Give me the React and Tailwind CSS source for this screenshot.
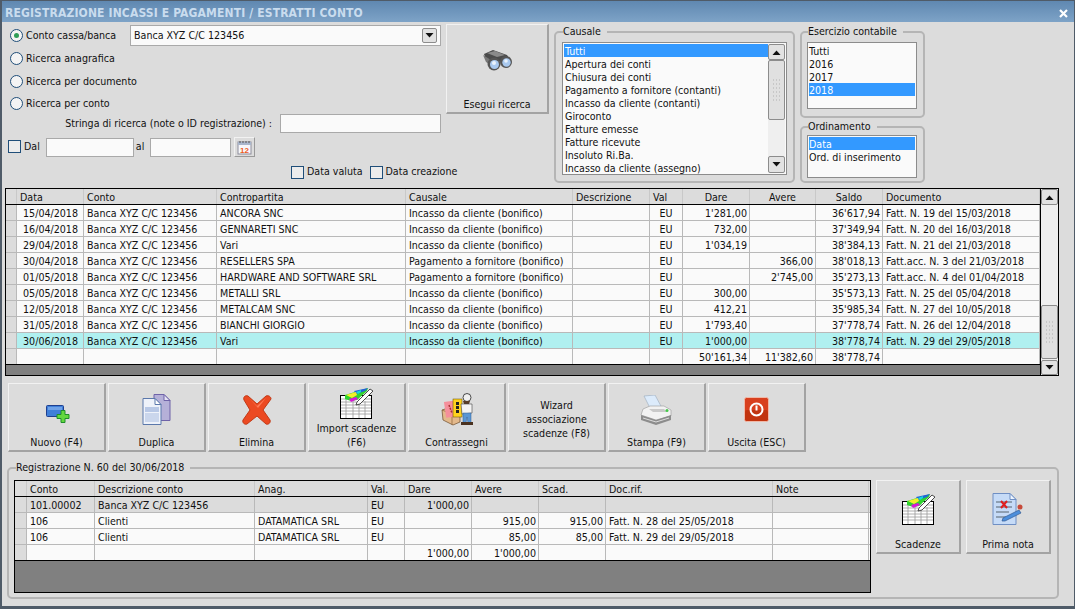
const mainCols = "grid grid-cols-[11px_67px_133px_189px_167px_77px_33px_67px_66px_67px_157px]";
const subCols = "grid grid-cols-[12px_68px_160px_113px_37px_67px_67px_67px_167px_96px]";

const movimenti = [
  ["15/04/2018", "ANCORA SNC", "Incasso da cliente (bonifico)", "1'281,00", "", "36'617,94", "Fatt. N. 19 del 15/03/2018"],
  ["16/04/2018", "GENNARETI SNC", "Incasso da cliente (bonifico)", "732,00", "", "37'349,94", "Fatt. N. 20 del 16/03/2018"],
  ["29/04/2018", "Vari", "Incasso da cliente (bonifico)", "1'034,19", "", "38'384,13", "Fatt. N. 21 del 21/03/2018"],
  ["30/04/2018", "RESELLERS SPA", "Pagamento a fornitore (bonifico)", "", "366,00", "38'018,13", "Fatt.acc. N. 3 del 21/03/2018"],
  ["01/05/2018", "HARDWARE AND SOFTWARE SRL", "Pagamento a fornitore (bonifico)", "", "2'745,00", "35'273,13", "Fatt.acc. N. 4 del 01/04/2018"],
  ["05/05/2018", "METALLI SRL", "Incasso da cliente (bonifico)", "300,00", "", "35'573,13", "Fatt. N. 25 del 05/04/2018"],
  ["12/05/2018", "METALCAM SNC", "Incasso da cliente (bonifico)", "412,21", "", "35'985,34", "Fatt. N. 27 del 10/05/2018"],
  ["31/05/2018", "BIANCHI GIORGIO", "Incasso da cliente (bonifico)", "1'793,40", "", "37'778,74", "Fatt. N. 26 del 12/04/2018"],
  ["30/06/2018", "Vari", "Incasso da cliente (bonifico)", "1'000,00", "", "38'778,74", "Fatt. N. 29 del 29/05/2018"],
];

const righe = [
  ["101.00002", "Banca XYZ C/C 123456", "", "EU", "1'000,00", "", "", ""],
  ["106", "Clienti", "DATAMATICA SRL", "EU", "", "915,00", "915,00", "Fatt. N. 28 del 25/05/2018"],
  ["106", "Clienti", "DATAMATICA SRL", "EU", "", "85,00", "85,00", "Fatt. N. 29 del 29/05/2018"],
  ["", "", "", "", "1'000,00", "1'000,00", "", ""],
];

const causali = ["Tutti", "Apertura dei conti", "Chiusura dei conti", "Pagamento a fornitore (contanti)", "Incasso da cliente (contanti)", "Giroconto", "Fatture emesse", "Fatture ricevute", "Insoluto Ri.Ba.", "Incasso da cliente (assegno)"];

function Cell({ children, right, center, head }) {
  return (
    <div className={`h-full px-[3px] pt-px border-r border-[#b9b9b9] overflow-hidden whitespace-nowrap leading-[14px] ${right ? "text-right pr-[2px]" : ""} ${center ? "text-center" : ""} ${head ? "border-[#c9c9c9]" : ""}`}>
      {children}
    </div>
  );
}

function Radio({ checked, label }) {
  return (
    <label className="flex items-center gap-[3px] ml-[2px] whitespace-nowrap">
      <span className="w-[13px] h-[13px] rounded-full border border-[#1f4e79] bg-[#f4f4f4] flex items-center justify-center">
        {checked && <span className="w-[5px] h-[5px] rounded-full bg-[#2f9e57]" />}
      </span>
      {label}
    </label>
  );
}

function Check({ label }) {
  return (
    <label className="flex items-center gap-[3px] whitespace-nowrap">
      <span className="w-[13px] h-[13px] border border-[#1f4e79] bg-[#ececec]" />
      {label}
    </label>
  );
}

function Arrow({ down }) {
  return (
    <svg width="9" height="5" viewBox="0 0 9 5">
      <path d={down ? "M0.5 0h8L4.5 4.5z" : "M0.5 5h8L4.5 0.5z"} fill="#111" />
    </svg>
  );
}

function ScrollBtn({ down, className }) {
  return (
    <div className={`flex items-center justify-center rounded-[2px] bg-[#e2e2e2] border border-[#8c8c8c] ${className}`}>
      <Arrow down={down} />
    </div>
  );
}

function Grip() {
  return (
    <svg width="7" height="23" viewBox="0 0 7 23">
      <path d="M0 1h7M0 5h7M0 9h7M0 13h7M0 17h7M0 21h7" stroke="#b0b0b0" strokeWidth="1" strokeDasharray="1 2" fill="none" />
    </svg>
  );
}

function ToolButton({ label, icon, className = "w-[98px] h-[69px]" }) {
  return (
    <button className={`${className} flex flex-col items-center bg-[#dcdcdc] border-t border-l border-t-[#f2f2f2] border-l-[#f2f2f2] border-b-2 border-r-2 border-b-[#a3a3a3] border-r-[#a3a3a3] text-center leading-[14px] pb-[1px]`}>
      {icon ? <span className="flex-1 flex items-center justify-center">{icon}</span> : null}
      <span className={icon ? "" : "pt-[14px]"}>{label}</span>
    </button>
  );
}

function Binoculars() {
  return (
    <svg width="32" height="24" viewBox="0 0 32 24">
      <path d="M3 5l9-4 14 5 4 6-5 3-7-3-4 2-9-3z" fill="#4b4b4b" />
      <path d="M6 4l8-2 10 4-8 2z" fill="#8a8a8a" />
      <path d="M2 6l8 5 0 5-5-3z" fill="#777" />
      <circle cx="13" cy="15" r="6.5" fill="#555" />
      <circle cx="13.5" cy="15.5" r="4.5" fill="#a9c9ef" />
      <circle cx="13" cy="14" r="2" fill="#eaf3fc" />
      <circle cx="25" cy="13" r="6" fill="#555" />
      <circle cx="25.5" cy="13.5" r="4.2" fill="#a9c9ef" />
      <circle cx="25" cy="12" r="1.8" fill="#eaf3fc" />
    </svg>
  );
}

function NewIcon() {
  return (
    <svg width="25" height="18" viewBox="0 0 25 18" className="mt-[8px] ml-[4px]">
      <rect x="0.5" y="0.5" width="17" height="11" rx="1" fill="#3f7fd9" stroke="#1f3f8f" />
      <rect x="2" y="2" width="14" height="3" fill="#6fa2e8" />
      <path d="M11 9.500h4v-4h4v4h4v4h-4v4h-4v-4h-4z" fill="#63d83f" stroke="#1f8f2a" />
    </svg>
  );
}

function DuplicateIcon() {
  return (
    <svg width="29" height="31" viewBox="0 0 29 31">
      <path d="M12 0.500h10l6 6v20H12z" fill="#b5b0d8" stroke="#6f63a8" />
      <path d="M22 0.500v6h6z" fill="#e6e4f4" stroke="#6f63a8" />
      <path d="M1 4.500h12l6 6v20H1z" fill="#eef2fa" stroke="#5b78ab" />
      <path d="M13 4.500v6h6z" fill="#fff" stroke="#5b78ab" />
      <rect x="3" y="13" width="14" height="5" fill="#b8c8e6" />
      <rect x="3" y="19" width="14" height="9" fill="#cad6ec" />
    </svg>
  );
}

function DeleteIcon() {
  return (
    <svg width="30" height="30" viewBox="0 0 30 30">
      <path d="M6 1l9 8 9-8c3-1 5 1 5 3l-8 11 7 10c1 3-2 5-4 4l-9-8-10 8c-2 1-5-1-4-4l7-10L2 5C1 2 3 0 6 1z" fill="#ec4a22" stroke="#c13a17" />
      <path d="M7 3l8 8 9-8-8 10z" fill="#ff7a55" />
    </svg>
  );
}

function SheetIcon() {
  return (
    <svg width="33" height="32" viewBox="0 0 33 32">
      <rect x="0.500" y="8.500" width="31" height="23" fill="#fff" stroke="#000" />
      <path d="M1 12h30M1 15h30M1 18h30M1 21h30M1 24h30M1 27h30M6 9v22M13 14v17M19 14v17M25 14v17" stroke="#999" strokeWidth="0.800" />
      <path d="M5 8L28 1l-1 3-10 9-6 1-6-2z" fill="#2fd32f" />
      <path d="M14 4L28 1l-3 3-9 3z" fill="#1f62d8" />
      <path d="M6 8l10-3 1 3-5 3z" fill="#f3ef2a" />
      <path d="M9 12l7-2 2 2-7 3z" fill="#d818d8" />
      <path d="M16 5l5-2 0 2-3 2z" fill="#18d8d8" />
      <path d="M17 15L30 2l3 2-13 13-4 1z" fill="#fff" stroke="#222" strokeWidth="0.800" />
    </svg>
  );
}

function PackIcon() {
  return (
    <svg width="32" height="33" viewBox="0 0 32 33">
      <path d="M1 17l9-3 9 4v11l-7 3-10-5z" fill="#e3b98c" stroke="#6b4a2a" strokeWidth="0.700" />
      <path d="M1 17l10 4 8-3M11 21v11" stroke="#8a6238" strokeWidth="0.700" fill="none" />
      <rect x="4" y="8" width="11" height="16" fill="#f58f9b" transform="rotate(-8 10 16)" />
      <path d="M8 12l3 8" stroke="#a33" strokeWidth="1.500" strokeDasharray="2 1" />
      <rect x="12" y="6" width="9" height="18" fill="#ffd21e" stroke="#5c4a00" strokeWidth="0.500" />
      <path d="M16.500 9v12" stroke="#222" strokeWidth="3" strokeDasharray="3 1" />
      <circle cx="26" cy="4.500" r="4" fill="#f0f0f0" stroke="#222" strokeWidth="0.800" />
      <path d="M22 8l7 0-1 3h-5z" fill="#5a3d28" />
      <path d="M20 11h11v9l-10 1z" fill="#f4f4f4" stroke="#444" strokeWidth="0.600" />
      <path d="M22 20h8v10h-3l-1-6-1 6h-3z" fill="#5b97d4" stroke="#2e5f96" strokeWidth="0.500" />
      <path d="M20 29h6v3h-6zM26 29h6v3h-6z" fill="#4a3220" />
    </svg>
  );
}

function PrinterIcon() {
  return (
    <svg width="33" height="30" viewBox="0 0 33 30">
      <path d="M4 1l11-1 7 13H10z" fill="#dcebfb" stroke="#9ab" strokeWidth="0.600" />
      <path d="M3 14l7-3h14l7 4v6L16 25 1 20z" fill="#f2f2f2" stroke="#999" strokeWidth="0.600" />
      <path d="M1 20l15 5 15-5v5l-15 5-15-5z" fill="#8d8d8d" />
      <path d="M3 23l13 4 13-4" stroke="#ddd" fill="none" />
      <path d="M9 14h15l3 3H13z" fill="#c9c9c9" />
      <circle cx="27" cy="15.500" r="1.500" fill="#45c94a" />
    </svg>
  );
}

function ExitIcon() {
  return (
    <svg width="25" height="25" viewBox="0 0 25 25">
      <rect x="0.500" y="0.500" width="24" height="24" rx="2" fill="#d8401f" stroke="#f0b9a8" />
      <rect x="1" y="13" width="23" height="11" rx="2" fill="#c2340f" />
      <circle cx="12.500" cy="12.500" r="6" fill="none" stroke="#fff" strokeWidth="2" />
      <path d="M12.500 8.500v5" stroke="#fff" strokeWidth="2" />
    </svg>
  );
}

function NoteIcon() {
  return (
    <svg width="32" height="32" viewBox="0 0 32 32">
      <path d="M1 0.500h17l6 6v25H1z" fill="#c6dbf7" stroke="#6f8fc4" />
      <path d="M18 0.500v6h6z" fill="#eef5fe" stroke="#6f8fc4" />
      <path d="M4 9h16M4 14h16M4 19h13M4 24h10" stroke="#7c8c9c" strokeWidth="1.500" />
      <path d="M9 8l6 7M15 8l-6 7" stroke="#e01f1f" strokeWidth="2" />
      <path d="M11 25l16-8 2 3-16 8-3 0z" fill="#4d8fdc" stroke="#345c93" strokeWidth="0.700" />
      <circle cx="28" cy="14" r="2.500" fill="#c74a3a" />
    </svg>
  );
}

function CalendarIcon() {
  return (
    <svg width="15" height="15" viewBox="0 0 15 15">
      <rect x="1" y="2" width="13" height="12" fill="#f7f7fb" stroke="#8d8d9b" />
      <rect x="1" y="2" width="13" height="3" fill="#a9b6cc" />
      <path d="M3 1v2M6 1v2M9 1v2M12 1v2" stroke="#555" />
      <text x="7.500" y="12.500" textAnchor="middle" fontSize="8" fontWeight="700" fill="#ee5a1e" fontFamily="Liberation Sans, sans-serif">12</text>
    </svg>
  );
}

function GroupBox({ title, className, children }) {
  return (
    <fieldset className={`border-2 border-[#b5b5b5] rounded-[5px] px-[6px] ${className}`}>
      <legend className="ml-[1px] pr-[6px] leading-[13px]">{title}</legend>
      {children}
    </fieldset>
  );
}

export default function App() {
  return (
    <div className="w-[1075px] h-[609px] overflow-hidden flex flex-col bg-[#dcdcdc] text-[#111] text-[10.6px] border-l-2 border-r border-b-[3px] border-t border-[#4f5b68] font-['DejaVu_Sans_Condensed','Liberation_Sans',sans-serif]">
      {/* title bar */}
      <div className="h-[21px] shrink-0 flex items-center justify-between pt-[3px] pl-[3px] pr-[6px] bg-gradient-to-b from-[#5f88b1] to-[#7ea3c7]">
        <span className="font-bold text-[12px] tracking-[0.14px] text-[#c9dcee]">REGISTRAZIONE INCASSI E PAGAMENTI / ESTRATTI CONTO</span>
        <svg width="9" height="9" viewBox="0 0 9 9"><path d="M1 1l7 7M8 1l-7 7" stroke="#fff" strokeWidth="2.200" /></svg>
      </div>

      {/* search area */}
      <div className="h-[166px] shrink-0 flex pl-[6px]">
        <div className="w-[433px] flex flex-col pt-[3px]">
          <div className="flex items-center h-[21px]">
            <div className="w-[122px]"><Radio checked label="Conto cassa/banca" /></div>
            <div className="flex-1 h-[21px] flex items-center justify-between px-[3px] bg-[#fafafa] border border-[#a9a9a9]">
              <span>Banca XYZ C/C 123456</span>
              <ScrollBtn down className="w-[15px] h-[15px]" />
            </div>
          </div>
          <div className="flex items-center h-[23px] mt-px"><Radio label="Ricerca anagrafica" /></div>
          <div className="flex items-center h-[22px] mt-px"><Radio label="Ricerca per documento" /></div>
          <div className="flex items-center h-[22px]"><Radio label="Ricerca per conto" /></div>
          <div className="flex items-center justify-end h-[19px] -mt-px gap-[8px]">
            <span>Stringa di ricerca (note o ID registrazione) :</span>
            <div className="w-[161px] h-[19px] bg-[#fafafa] border border-[#a9a9a9]" />
          </div>
          <div className="flex items-center h-[20px] mt-[4px]">
            <Check label="Dal" />
            <div className="w-[88px] h-[19px] ml-[6px] bg-[#fafafa] border border-[#a9a9a9]" />
            <span className="w-[16px] pl-[2px]">al</span>
            <div className="w-[81px] h-[19px] bg-[#fafafa] border border-[#a9a9a9]" />
            <div className="w-[21px] h-[20px] ml-[3px] flex items-center justify-center border-t border-l border-t-[#f2f2f2] border-l-[#f2f2f2] border-b border-r border-b-[#999] border-r-[#999]"><CalendarIcon /></div>
          </div>
          <div className="flex items-center h-[14px] mt-[8px] pl-[283px] gap-[7px]">
            <Check label="Data valuta" />
            <Check label="Data creazione" />
          </div>
        </div>

        <div className="w-[104px] ml-[5px] mt-[2px]">
          <ToolButton label="Esegui ricerca" icon={<Binoculars />} className="w-[103px] h-[90px]" />
        </div>

        <GroupBox title="Causale" className="w-[241px] h-[158px] ml-[4px] mt-[3px]">
          <div className="h-[133px] border border-[#8c8c8c] bg-[#fafafa] flex p-[1px] mt-[4px]">
            <div className="flex-1 leading-[13px]">
              {causali.map((c, i) => (
                <div key={c} className={`h-[13px] pl-[1px] pt-px ${i === 0 ? "bg-[#3399ff] text-white" : ""}`}>{c}</div>
              ))}
            </div>
            <div className="w-[17px] flex flex-col bg-[#efefef]">
              <ScrollBtn className="h-[16px] shrink-0" />
              <div className="h-[60px] shrink-0 flex items-center justify-center rounded-[2px] bg-[#e0e0e0] border border-[#8c8c8c]"><Grip /></div>
              <div className="flex-1" />
              <ScrollBtn down className="h-[17px] shrink-0" />
            </div>
          </div>
        </GroupBox>

        <div className="w-[125px] ml-[5px] mt-[3px] flex flex-col gap-[2px]">
          <GroupBox title="Esercizio contabile" className="h-[93px] pl-[5px]">
            <div className="h-[67px] w-[110px] border border-[#8c8c8c] bg-[#fafafa] p-[1px] mt-[4px] leading-[13px]">
              {["Tutti", "2016", "2017", "2018"].map((a) => (
                <div key={a} className={`h-[13px] pt-px ${a === "2018" ? "bg-[#3399ff] text-white" : ""}`}>{a}</div>
              ))}
            </div>
          </GroupBox>
          <GroupBox title="Ordinamento" className="h-[63px] pl-[5px]">
            <div className="h-[43px] w-[110px] border border-[#8c8c8c] bg-[#fafafa] p-[1px] mt-[2px] leading-[13px]">
              <div className="h-[13px] pt-px bg-[#3399ff] text-white">Data</div>
              <div className="h-[13px] pt-px">Ord. di inserimento</div>
            </div>
          </GroupBox>
        </div>
      </div>

      {/* movimenti */}
      <div className="ml-[3px] w-[1054px] h-[188px] shrink-0 flex border border-black bg-[#808080]">
        <div className="w-[1035px] flex flex-col border-r border-black">
          <div className={`${mainCols} h-[16px] bg-[#dcdcdc] border-b border-black`}>
            <Cell head />
            <Cell head>Data</Cell>
            <Cell head>Conto</Cell>
            <Cell head>Contropartita</Cell>
            <Cell head>Causale</Cell>
            <Cell head>Descrizione</Cell>
            <Cell head>Val</Cell>
            <Cell head center>Dare</Cell>
            <Cell head center>Avere</Cell>
            <Cell head center>Saldo</Cell>
            <Cell head>Documento</Cell>
          </div>
          {movimenti.map((m, i) => (
            <div key={m[0]} className={`${mainCols} h-[16px] border-b border-[#b9b9b9] ${i === 8 ? "bg-[#b0f0f0]" : "bg-[#fafafa]"}`}>
              <div className="bg-[#dcdcdc] border-r border-[#b9b9b9]" />
              <Cell right><span className="pr-[3px]">{m[0]}</span></Cell>
              <Cell>Banca XYZ C/C 123456</Cell>
              <Cell>{m[1]}</Cell>
              <Cell>{m[2]}</Cell>
              <Cell />
              <Cell center>EU</Cell>
              <Cell right>{m[3]}</Cell>
              <Cell right>{m[4]}</Cell>
              <Cell right>{m[5]}</Cell>
              <Cell>{m[6]}</Cell>
            </div>
          ))}
          <div className={`${mainCols} h-[16px] bg-[#fafafa] border-b border-black`}>
            <div className="bg-[#dcdcdc] border-r border-[#b9b9b9]" />
            <Cell /><Cell /><Cell /><Cell /><Cell /><Cell />
            <Cell right>50'161,34</Cell>
            <Cell right>11'382,60</Cell>
            <Cell right>38'778,74</Cell>
            <Cell />
          </div>
        </div>
        <div className="flex-1 flex flex-col bg-[#efefef]">
          <ScrollBtn className="h-[16px] shrink-0" />
          <div className="flex-1" />
          <div className="h-[54px] shrink-0 flex items-center justify-center rounded-[2px] bg-[#e0e0e0] border border-[#8c8c8c]"><Grip /></div>
          <ScrollBtn down className="h-[15px] shrink-0 mt-[1px]" />
        </div>
      </div>

      {/* toolbar */}
      <div className="flex gap-[2px] ml-[6px] mt-[7px] shrink-0">
        <ToolButton label="Nuovo (F4)" icon={<NewIcon />} />
        <ToolButton label="Duplica" icon={<DuplicateIcon />} />
        <ToolButton label="Elimina" icon={<DeleteIcon />} />
        <ToolButton label={<>Import scadenze<br />(F6)</>} icon={<SheetIcon />} />
        <ToolButton label="Contrassegni" icon={<PackIcon />} />
        <ToolButton label={<>Wizard<br />associazione<br />scadenze (F8)</>} />
        <ToolButton label="Stampa (F9)" icon={<PrinterIcon />} />
        <ToolButton label="Uscita (ESC)" icon={<ExitIcon />} />
      </div>

      {/* dettaglio registrazione */}
      <GroupBox title="Registrazione N. 60 del 30/06/2018" className="ml-[5px] mt-[9px] w-[1052px] h-[138px] shrink-0">
        <div className="flex gap-[5px] mt-[6px] ml-[-1px]">
          <div className="w-[857px] h-[113px] border border-black bg-[#808080]">
            <div className={`${subCols} h-[16px] bg-[#dcdcdc] border-b border-black`}>
              <Cell head />
              <Cell head>Conto</Cell>
              <Cell head>Descrizione conto</Cell>
              <Cell head>Anag.</Cell>
              <Cell head>Val.</Cell>
              <Cell head>Dare</Cell>
              <Cell head>Avere</Cell>
              <Cell head>Scad.</Cell>
              <Cell head>Doc.rif.</Cell>
              <Cell head>Note</Cell>
            </div>
            {righe.map((r, i) => (
              <div key={i} className={`${subCols} h-[16px] border-b ${i === 3 ? "border-black" : "border-[#b9b9b9]"} ${i === 0 ? "bg-[#dcdcdc]" : "bg-[#fafafa]"}`}>
                <div className="bg-[#dcdcdc] border-r border-[#b9b9b9]" />
                <Cell>{r[0]}</Cell>
                <Cell>{r[1]}</Cell>
                <Cell>{r[2]}</Cell>
                <Cell>{r[3]}</Cell>
                <Cell right>{r[4]}</Cell>
                <Cell right>{r[5]}</Cell>
                <Cell right>{r[6]}</Cell>
                <Cell>{r[7]}</Cell>
                <Cell />
              </div>
            ))}
          </div>
          <ToolButton label="Scadenze" icon={<SheetIcon />} className="w-[85px] h-[74px]" />
          <ToolButton label="Prima nota" icon={<NoteIcon />} className="w-[85px] h-[74px]" />
        </div>
      </GroupBox>
    </div>
  );
}
